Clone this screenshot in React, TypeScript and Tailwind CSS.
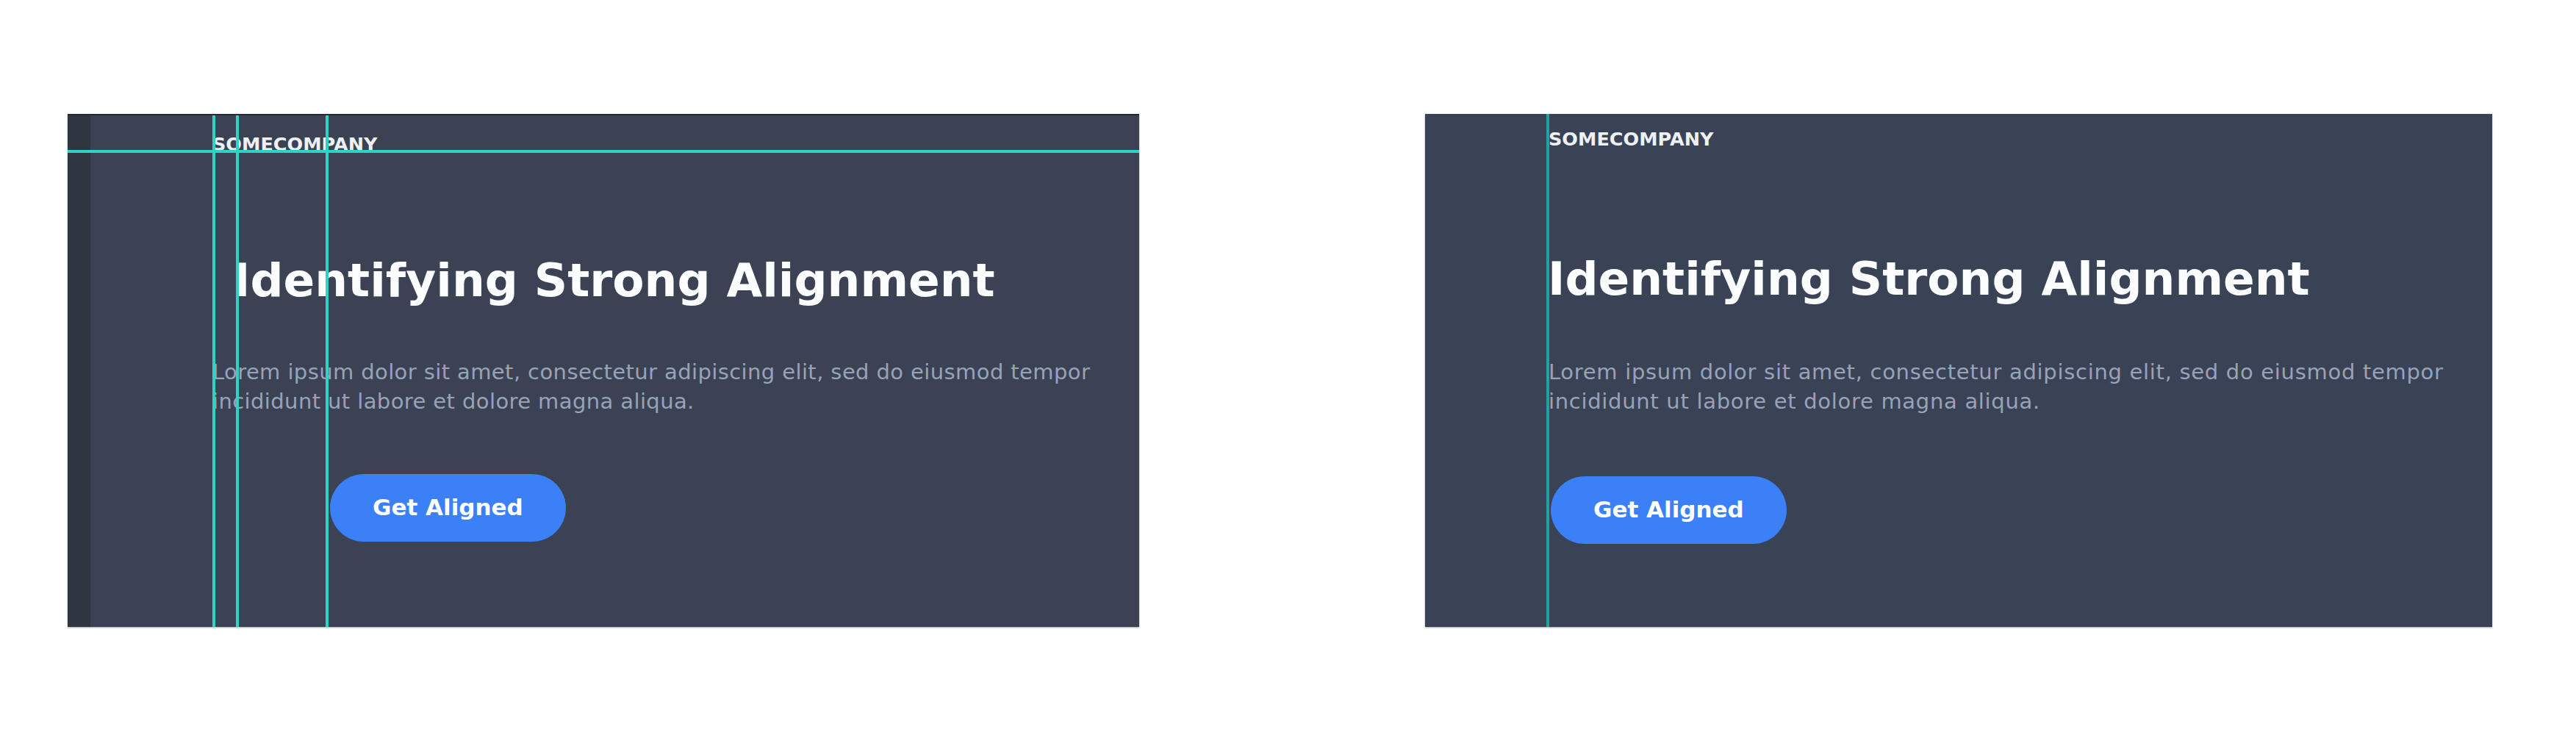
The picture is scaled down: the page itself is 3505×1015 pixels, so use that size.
import React from "react";

// Two versions of the same hero block: one with misaligned content
// (guides shown), one with everything sitting on a single guide.

const Logo = ({ className = "" }: { className?: string }) => (
  <div className={`text-[25.5px] font-bold leading-none text-[#eef0f4] ${className}`}>SOMECOMPANY</div>
);

const Heading = ({ className = "" }: { className?: string }) => (
  <h1 className={`whitespace-nowrap text-[63px] font-bold leading-none text-[#fbfcfd] ${className}`}>
    Identifying Strong Alignment
  </h1>
);

const Copy = ({ className = "" }: { className?: string }) => (
  <p className={`whitespace-nowrap text-[29px] leading-[40px] text-[#98a2b9] ${className}`}>
    Lorem ipsum dolor sit amet, consectetur adipiscing elit, sed do eiusmod tempor
    <br />
    incididunt ut labore et dolore magna aliqua.
  </p>
);

const CtaButton = ({ className = "" }: { className?: string }) => (
  <button
    className={`flex h-[92px] items-center justify-center rounded-full bg-[#3b80f6] px-[58px] text-[31px] font-bold text-white ${className}`}
  >
    Get Aligned
  </button>
);

const MisalignedPanel = () => (
  <div className="relative flex h-[698px] w-[1458px] shrink-0 border-t-2 border-[#22272e] bg-[#3a4254] shadow-[0_1px_2px_rgba(0,0,0,0.35)]">
    <div className="w-[31px] shrink-0 bg-[#2f3642]" />
    <div className="flex flex-col items-start pl-[166px]">
      <Logo className="mt-[27px]" />
      <Heading className="ml-[28px] mt-[140px]" />
      <Copy className="mt-[73px] tracking-[0.4px]" />
      <CtaButton className="ml-[160px] mt-[79px]" />
    </div>

    {/* guides */}
    <div className="absolute left-0 right-0 top-[47px] h-[4px] bg-[#2cd3c6]" />
    <div className="absolute bottom-0 left-[197px] top-0 w-[4px] bg-[#2cd3c6]" />
    <div className="absolute bottom-0 left-[229px] top-0 w-[4px] bg-[#2cd3c6]" />
    <div className="absolute bottom-0 left-[351px] top-0 w-[4px] bg-[#2cd3c6]" />
  </div>
);

const AlignedPanel = () => (
  <div className="relative flex h-[698px] w-[1452px] shrink-0 flex-col items-start bg-[#3a4255] pl-[168px] shadow-[0_1px_2px_rgba(0,0,0,0.35)]">
    <Logo className="mt-[22px]" />
    <Heading className="-ml-[1px] mt-[145px]" />
    <Copy className="mt-[75px] tracking-[0.7px]" />
    <CtaButton className="ml-[3px] mt-[82px]" />

    <div className="absolute bottom-0 left-[165px] top-0 w-[4px] bg-[#1fa39f]" />
  </div>
);

export default function App() {
  return (
    <div className="min-h-screen bg-white font-['DejaVu_Sans',sans-serif]">
      <div className="flex gap-[389px] pl-[92px] pt-[155px]">
        <MisalignedPanel />
        <AlignedPanel />
      </div>
    </div>
  );
}
